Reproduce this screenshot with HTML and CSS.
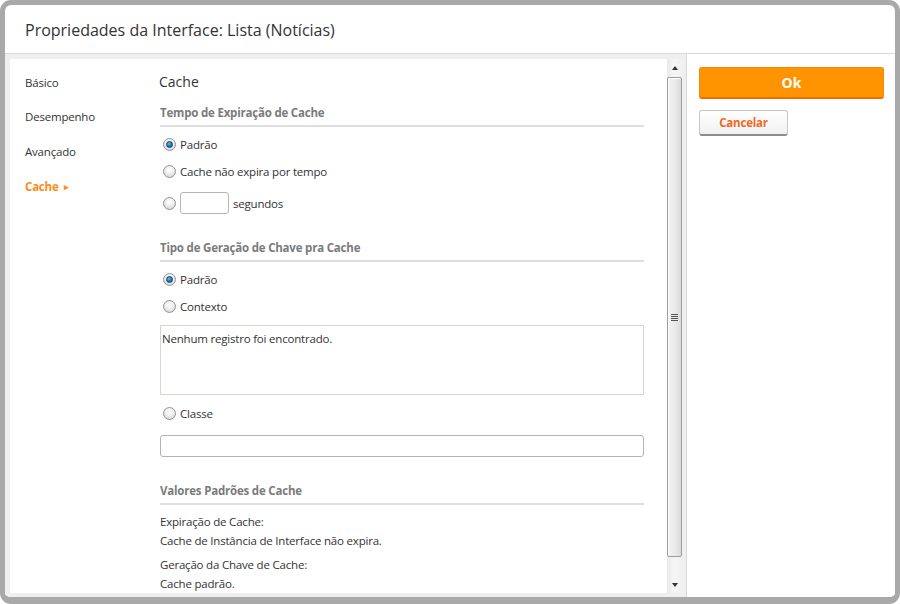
FILE: index.html
```html
<!DOCTYPE html>
<html lang="pt">
<head>
<meta charset="utf-8">
<title>Propriedades da Interface</title>
<link rel="stylesheet" href="styles.css">
</head>
<body>
<div class="dialog">
  <header class="title">Propriedades da Interface: Lista (Notícias)</header>
  <div class="body">
    <div class="main">
      <div class="panel">
        <nav class="nav">
          <div class="nav-item">Básico</div>
          <div class="nav-item">Desempenho</div>
          <div class="nav-item">Avançado</div>
          <div class="nav-item active">Cache <span class="nav-arrow">&#9656;</span></div>
        </nav>
        <section class="content">
          <h2 class="heading">Cache</h2>

          <h3 class="sec-title">Tempo de Expiração de Cache</h3>
          <div class="row"><span class="radio checked"></span><span>Padrão</span></div>
          <div class="row"><span class="radio"></span><span>Cache não expira por tempo</span></div>
          <div class="row row-input"><span class="radio"></span><span class="small-input"></span><span>segundos</span></div>

          <h3 class="sec-title sec-gap">Tipo de Geração de Chave pra Cache</h3>
          <div class="row"><span class="radio checked"></span><span>Padrão</span></div>
          <div class="row"><span class="radio"></span><span>Contexto</span></div>
          <div class="listbox">Nenhum registro foi encontrado.</div>
          <div class="row row-classe"><span class="radio"></span><span>Classe</span></div>
          <div class="text-input"></div>

          <h3 class="sec-title sec-gap">Valores Padrões de Cache</h3>
          <p class="info first">Expiração de Cache:<br>Cache de Instância de Interface não expira.</p>
          <p class="info">Geração da Chave de Cache:<br>Cache padrão.</p>
        </section>
      </div>
      <div class="scrollbar">
        <div class="sb-btn"><span class="arrow-up"></span></div>
        <div class="sb-thumb"><span class="grip"></span></div>
        <div class="sb-track"></div>
        <div class="sb-btn"><span class="arrow-down"></span></div>
      </div>
    </div>
    <aside class="actions">
      <button class="btn-ok">Ok</button>
      <button class="btn-cancel">Cancelar</button>
    </aside>
  </div>
</div>
</body>
</html>
```
FILE: styles.css
```css
* { box-sizing: border-box; }

html, body {
  margin: 0;
  padding: 0;
  background: #ffffff;
}

body {
  font-family: "Open Sans", "Noto Sans", sans-serif;
  font-size: 11.5px;
  letter-spacing: -0.2px;
  color: #333333;
}

.dialog {
  width: 900px;
  height: 604px;
  border: 5px solid #a9a9a9;
  border-bottom-width: 7px;
  border-radius: 11px;
  background: #ffffff;
  display: flex;
  flex-direction: column;
  overflow: hidden;
}

.title {
  height: 49px;
  flex: 0 0 49px;
  border-bottom: 1px solid #d9d9d9;
  padding: 13px 0 0 20px;
  font-size: 16px;
  line-height: 24px;
  letter-spacing: 0;
  color: #333333;
}

.body {
  flex: 1;
  display: flex;
  min-height: 0;
}

.main {
  width: 682px;
  flex: 0 0 682px;
  background: #efefef;
  padding: 5px 3px 4px 5px;
  border-right: 1px solid #dadada;
  display: flex;
}

.panel {
  width: 657px;
  background: #ffffff;
  display: flex;
  overflow: hidden;
}

.nav {
  width: 150px;
  flex: 0 0 150px;
  padding: 6.5px 0 0 15px;
}

.nav-item {
  height: 34.7px;
  line-height: 34.7px;
  color: #333333;
}

.nav-item.active {
  color: #ff8a1c;
  font-weight: bold;
}

.nav-arrow {
  font-size: 9px;
  margin-left: 3px;
  vertical-align: 1px;
}

.content {
  width: 484px;
  flex: 0 0 484px;
  padding-top: 13px;
}

.heading {
  margin: 0 0 0 -1px;
  font-size: 14px;
  line-height: 20px;
  font-weight: normal;
  letter-spacing: 0;
  color: #333333;
}

.sec-title {
  margin: 13px 0 0;
  padding-bottom: 4px;
  border-bottom: 2px solid #dedede;
  font-size: 11.5px;
  line-height: 16px;
  font-weight: bold;
  color: #7b7b7b;
}

.sec-title.sec-gap { margin-top: 26px; }

.row {
  display: flex;
  align-items: center;
  height: 20px;
  margin-top: 7px;
  gap: 4px;
}

.row-input {
  height: 22px;
  margin-top: 11px;
}

.row-classe { margin-top: 8px; }

.radio {
  width: 13px;
  height: 13px;
  margin-left: 3px;
  border-radius: 50%;
  border: 1px solid #959595;
  background: radial-gradient(circle at 50% 35%, #ffffff 0%, #eeeeee 45%, #c9c9c9 100%);
  display: inline-flex;
  align-items: center;
  justify-content: center;
  flex: 0 0 13px;
}

.radio.checked::after {
  content: "";
  width: 7px;
  height: 7px;
  border-radius: 50%;
  background: radial-gradient(circle at 40% 35%, #5fc3f5 0%, #1680c8 50%, #0c3f6e 100%);
  border: 1px solid #1d3f5c;
  box-sizing: border-box;
}

.small-input {
  width: 49px;
  height: 22px;
  border: 1px solid #b5b5b5;
  border-radius: 3px;
  background: #ffffff;
}

.listbox {
  margin-top: 9px;
  height: 70px;
  border: 1px solid #d8d6cf;
  padding: 4px 1px;
  line-height: 17px;
  color: #333333;
}

.text-input {
  margin-top: 12px;
  height: 22px;
  border: 1px solid #b3b3b3;
  border-radius: 3px;
  background: #ffffff;
}

.info {
  margin: 5px 0 0;
  line-height: 19px;
}

.info.first { margin-top: 7px; }

.scrollbar {
  width: 16px;
  flex: 0 0 16px;
  background: linear-gradient(to right, #e9e9e9, #f5f5f5 40%, #f0f0f0);
  display: flex;
  flex-direction: column;
}

.sb-btn {
  height: 17px;
  flex: 0 0 17px;
  display: flex;
  align-items: center;
  justify-content: center;
}

.arrow-up {
  width: 0;
  height: 0;
  border-left: 3.5px solid transparent;
  border-right: 3.5px solid transparent;
  border-bottom: 4px solid #333333;
}

.arrow-down {
  width: 0;
  height: 0;
  border-left: 3.5px solid transparent;
  border-right: 3.5px solid transparent;
  border-top: 4px solid #333333;
}

.sb-thumb {
  height: 480px;
  flex: 0 0 480px;
  margin-top: 1px;
  margin-right: 1px;
  border: 1px solid #9b9b9b;
  border-radius: 2px;
  background: linear-gradient(to right, #f3f3f3, #ececec 45%, #dcdcdc);
  box-shadow: inset 1px 1px 0 #ffffff;
  display: flex;
  align-items: center;
  justify-content: center;
}

.grip {
  width: 7px;
  height: 7px;
  background: repeating-linear-gradient(to bottom, #555555 0, #555555 1px, #e8e8e8 1px, #e8e8e8 2px);
}

.sb-track { flex: 1; }

.actions {
  flex: 1;
  background: #ffffff;
  padding: 13px 10px 0 12px;
  display: flex;
  flex-direction: column;
  align-items: flex-start;
}

.btn-ok {
  width: 185px;
  height: 32px;
  border: 1px solid #f98a00;
  border-bottom: 2px solid #ec6f00;
  border-radius: 3px;
  background: #ff9400;
  color: #ffffff;
  font-family: "Open Sans", "Noto Sans", sans-serif;
  font-size: 14px;
  font-weight: bold;
  padding: 0;
}

.btn-cancel {
  margin-top: 11px;
  width: 89px;
  height: 26px;
  border: 1px solid #c6c6c6;
  border-bottom: 2px solid #8c8c8c;
  border-radius: 3px;
  background: linear-gradient(to bottom, #ffffff, #f1f1f1);
  color: #f4661b;
  font-family: "Open Sans", "Noto Sans", sans-serif;
  font-size: 11.5px;
  letter-spacing: -0.2px;
  font-weight: bold;
  padding: 0;
}
```
